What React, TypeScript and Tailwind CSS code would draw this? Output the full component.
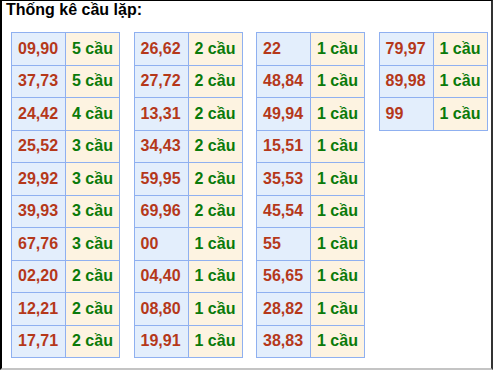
const columns: [string, number][][] = [
  [
    ["09,90", 5],
    ["37,73", 5],
    ["24,42", 4],
    ["25,52", 3],
    ["29,92", 3],
    ["39,93", 3],
    ["67,76", 3],
    ["02,20", 2],
    ["12,21", 2],
    ["17,71", 2],
  ],
  [
    ["26,62", 2],
    ["27,72", 2],
    ["13,31", 2],
    ["34,43", 2],
    ["59,95", 2],
    ["69,96", 2],
    ["00", 1],
    ["04,40", 1],
    ["08,80", 1],
    ["19,91", 1],
  ],
  [
    ["22", 1],
    ["48,84", 1],
    ["49,94", 1],
    ["15,51", 1],
    ["35,53", 1],
    ["45,54", 1],
    ["55", 1],
    ["56,65", 1],
    ["28,82", 1],
    ["38,83", 1],
  ],
  [
    ["79,97", 1],
    ["89,98", 1],
    ["99", 1],
  ],
];

function CauTable({ rows }: { rows: [string, number][] }) {
  return (
    <table className="w-[109px] border-collapse table-fixed">
      <tbody>
        {rows.map(([pair, count]) => (
          <tr key={pair} className="h-[32.5px]">
            <td className="w-1/2 border border-[#8fb0f0] bg-[#e3eefc] px-[6px] text-left text-[#b5381a]">
              {pair}
            </td>
            <td className="w-1/2 border border-[#8fb0f0] bg-[#fdf3e1] px-[6px] text-left text-[#0a7a0a]">
              {count} cầu
            </td>
          </tr>
        ))}
      </tbody>
    </table>
  );
}

export default function App() {
  return (
    <div className="w-[493px] h-[370px] overflow-hidden bg-white border-t border-t-black border-l-2 border-l-black border-r-2 border-r-[#333] border-b-2 border-b-[#c4c4c4] font-['Liberation_Sans',Arial,sans-serif] text-[16px] font-bold">
      <div className="pl-[4px] leading-[18.4px] text-black">Thống kê cầu lặp:</div>
      <div className="mt-[13px] pl-[9px] flex items-start gap-[13.5px] leading-[18.4px]">
        {columns.map((rows, i) => (
          <CauTable key={i} rows={rows} />
        ))}
      </div>
    </div>
  );
}
